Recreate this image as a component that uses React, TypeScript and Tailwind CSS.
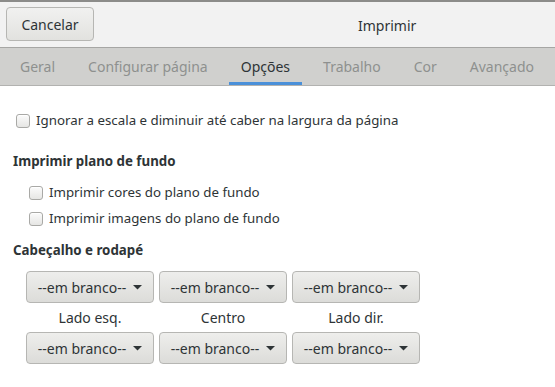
import React from "react";

const tabs = ["Geral", "Configurar página", "Opções", "Trabalho", "Cor", "Avançado"];

function Check({ label }: { label: string }) {
  return (
    <label className="flex items-center gap-[6px] h-[20px]">
      <span className="w-[14px] h-[14px] rounded-[3px] border border-[#a9a9a6] bg-gradient-to-b from-[#fbfbfb] to-[#e6e6e4] shadow-[inset_0_1px_0_white]" />
      <span>{label}</span>
    </label>
  );
}

function Combo() {
  return (
    <button className="w-[128px] h-[32px] rounded-[4px] border border-[#b6b6b3] bg-gradient-to-b from-[#eeeeec] to-[#dcdcd9] flex items-center justify-center gap-[7px] text-[14px] text-[#2e3436]">
      <span>--em branco--</span>
      <svg width="9" height="5" viewBox="0 0 9 5">
        <path d="M0 0 L9 0 L4.5 4.5 Z" fill="#2e3436" />
      </svg>
    </button>
  );
}

export default function App() {
  return (
    <div className="w-[555px] h-[387px] overflow-hidden bg-white text-[13.3px] text-[#2e3436] font-['Noto_Sans',sans-serif]">
      <div className="h-[2px] bg-[#8c8c8a]" />
      <div className="h-[46px] bg-[#f2f2f2] border-b border-[#a6a6a4] flex items-center relative">
        <button className="ml-[6px] mt-[-1px] w-[88px] h-[34px] rounded-[4px] border border-[#b6b6b3] bg-gradient-to-b from-[#f1f1f0] to-[#e2e2df] text-[14px]">
          Cancelar
        </button>
        <span className="absolute left-[358px] top-[13px] text-[14px]">Imprimir</span>
      </div>
      <div className="h-[38px] bg-[#d0d0ce] border-b border-[#b2b2b0] flex items-stretch pl-[8px] gap-[9px] text-[14px]">
        {tabs.map((t) => (
          <div
            key={t}
            className={
              t === "Opções"
                ? "px-[12px] whitespace-nowrap flex items-center justify-center text-[#2e3436] border-b-[3px] border-[#4a90d9] pt-[3px]"
                : "px-[12px] whitespace-nowrap flex items-center justify-center text-[#8e908f]"
            }
          >
            {t}
          </div>
        ))}
      </div>
      <div className="pl-[16px] pt-[25px]">
        <Check label="Ignorar a escala e diminuir até caber na largura da página" />
        <div className="font-bold mt-[20px] ml-[-3px] h-[20px] leading-[20px]">Imprimir plano de fundo</div>
        <div className="ml-[13px] mt-[12px] flex flex-col gap-[6px]">
          <Check label="Imprimir cores do plano de fundo" />
          <Check label="Imprimir imagens do plano de fundo" />
        </div>
        <div className="font-bold mt-[11px] ml-[-3px] h-[20px] leading-[20px]">Cabeçalho e rodapé</div>
        <div className="ml-[10px] mt-[11px] grid grid-cols-[128px_128px_128px] gap-x-[5px]">
          <Combo />
          <Combo />
          <Combo />
          <div className="h-[29px] flex items-center justify-center text-[14px]">Lado esq.</div>
          <div className="h-[29px] flex items-center justify-center text-[14px]">Centro</div>
          <div className="h-[29px] flex items-center justify-center text-[14px]">Lado dir.</div>
          <Combo />
          <Combo />
          <Combo />
        </div>
      </div>
    </div>
  );
}
